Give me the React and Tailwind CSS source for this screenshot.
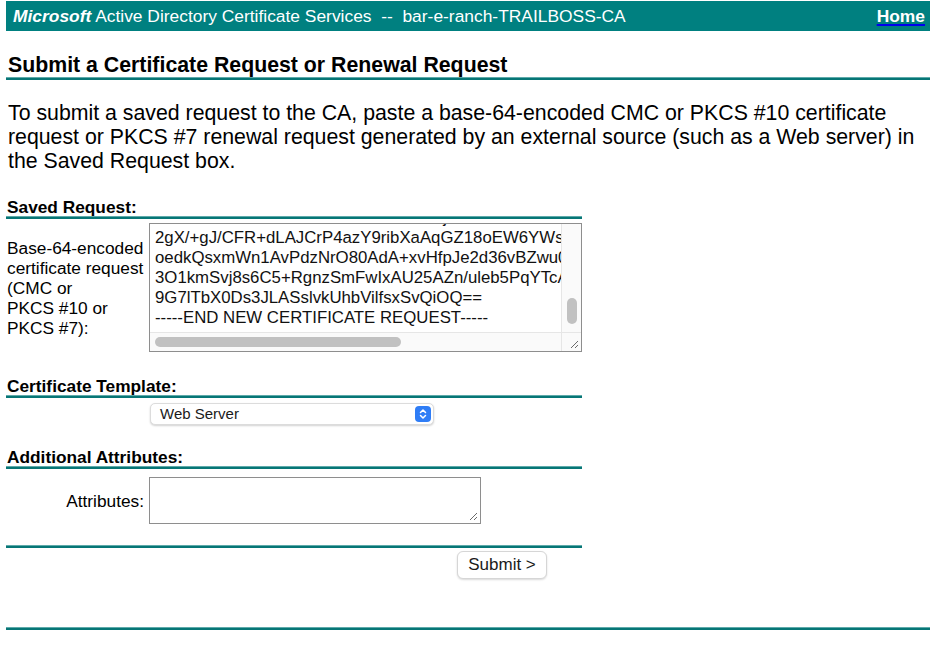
export default function App() {
  const font = "font-['Liberation_Sans',Arial,Helvetica,sans-serif]";
  return (
    <div className={`w-[936px] h-[650px] bg-white text-black ${font} px-[6px] pt-px overflow-hidden`}>
      {/* Header bar */}
      <div className="h-[30px] w-[924px] bg-[#008080] flex items-center justify-between pl-[7px] pr-[5px] text-white text-[17.4px] leading-[20px]">
        <div className="whitespace-pre">
          <span className="font-bold italic">Microsoft</span> Active Directory Certificate Services{"  --  "}bar-e-ranch-TRAILBOSS-CA
        </div>
        <a className="font-bold underline decoration-[#0000ee] decoration-2 underline-offset-2 text-white">Home</a>
      </div>

      {/* Title */}
      <div className="mt-[22px] w-[924px]">
        <div className="text-[21.3px] leading-[24px] font-bold pl-[2px]">Submit a Certificate Request or Renewal Request</div>
        <div className="h-[3px] bg-[#077676] border-t border-[#5faaaa]" />
      </div>

      {/* Paragraph */}
      <p className="mt-[21px] text-[21.3px] leading-[24px] pl-[2px] w-[924px]">
        To submit a saved request to the CA, paste a base-64-encoded CMC or PKCS #10 certificate request or PKCS #7 renewal request generated by an external source (such as a Web server) in the Saved Request box.
      </p>

      {/* Saved Request */}
      <div className="mt-[25px] w-[576px]">
        <div className="text-[17.3px] leading-[18px] font-bold pl-[1px]">Saved Request:</div>
        <div className="h-[3px] bg-[#077676] border-t border-[#5faaaa]" />
      </div>

      <div className="mt-[4px] w-[576px] flex items-center">
        <div className="w-[143px] text-[17.3px] leading-[20px] pl-px">
          Base-64-encoded<br />certificate request<br />(CMC or<br />PKCS #10 or<br />PKCS #7):
        </div>
        <div className="relative w-[433px] h-[129px] border border-[#8e8e8e] bg-white overflow-hidden">
          <div className="absolute inset-0 right-[20px] bottom-[19px] overflow-hidden">
            <div className="-mt-[16px] pl-[5px] text-[16.8px] leading-[20px] whitespace-pre text-[#111]">
              <div>AvR0kEtNbHs3ZK5W+Lm8Ux7dCfTa1jNRe4eIwM2cXb6Hk9ZtyS0Lf</div>
              <div>2gX/+gJ/CFR+dLAJCrP4azY9ribXaAqGZ18oEW6YWsfAq</div>
              <div>oedkQsxmWn1AvPdzNrO80AdA+xvHfpJe2d36vBZwu0Cd</div>
              <div>3O1kmSvj8s6C5+RgnzSmFwIxAU25AZn/uleb5PqYTcAk</div>
              <div>9G7lTbX0Ds3JLASslvkUhbVilfsxSvQiOQ==</div>
              <div>-----END NEW CERTIFICATE REQUEST-----</div>
            </div>
          </div>
          {/* vertical scrollbar track */}
          <div className="absolute top-0 right-0 w-[20px] bottom-[19px] bg-[#fafafa] border-l border-[#e6e6e6]">
            <div className="absolute left-[5px] top-[74px] w-[10px] h-[26px] rounded-full bg-[#c1c1c1]" />
          </div>
          {/* horizontal scrollbar track */}
          <div className="absolute left-0 bottom-0 right-[20px] h-[19px] bg-[#fafafa] border-t border-[#e6e6e6]">
            <div className="absolute left-[5px] top-[4px] w-[246px] h-[10px] rounded-full bg-[#c1c1c1]" />
          </div>
          {/* corner with grip */}
          <div className="absolute right-0 bottom-0 w-[20px] h-[19px] bg-[#fafafa] border-l border-t border-[#e6e6e6]">
            <svg className="absolute right-[2px] bottom-[2px]" width="10" height="10" viewBox="0 0 10 10">
              <line x1="2" y1="9" x2="9" y2="2" stroke="#6b6b6b" strokeWidth="1" />
              <line x1="6" y1="9" x2="9" y2="6" stroke="#6b6b6b" strokeWidth="1" />
            </svg>
          </div>
        </div>
      </div>

      {/* Certificate Template */}
      <div className="mt-[25px] w-[576px]">
        <div className="text-[17.3px] leading-[18px] font-bold pl-[1px]">Certificate Template:</div>
        <div className="h-[3px] bg-[#077676] border-t border-[#5faaaa]" />
      </div>
      <div className="mt-[5px] w-[576px] flex">
        <div className="w-[144px]" />
        <div className="w-[284px] h-[22px] rounded-[5px] bg-white border border-[#dcdcdc] shadow-[0_1px_2px_rgba(0,0,0,0.18)] flex items-center justify-between pl-[9px] pr-[2px]">
          <span className="text-[15px] leading-[18px] text-[#1a1a1a]">Web Server</span>
          <span className="w-[16px] h-[16px] rounded-[4px] bg-[#2f7df6] flex items-center justify-center">
            <svg width="10" height="12" viewBox="0 0 10 12">
              <polyline points="2.5,4.5 5,2 7.5,4.5" fill="none" stroke="white" strokeWidth="1.5" strokeLinecap="round" strokeLinejoin="round" />
              <polyline points="2.5,7.5 5,10 7.5,7.5" fill="none" stroke="white" strokeWidth="1.5" strokeLinecap="round" strokeLinejoin="round" />
            </svg>
          </span>
        </div>
      </div>

      {/* Additional Attributes */}
      <div className="mt-[23px] w-[576px]">
        <div className="text-[17.3px] leading-[18px] font-bold pl-[1px]">Additional Attributes:</div>
        <div className="h-[3px] bg-[#077676] border-t border-[#5faaaa]" />
      </div>
      <div className="mt-[8px] w-[576px] flex items-center">
        <div className="w-[143px] pr-[5px] text-right text-[17.3px] leading-[20px]">Attributes:</div>
        <div className="relative w-[332px] h-[47px] border border-[#8e8e8e] bg-white">
          <svg className="absolute right-[2px] bottom-[2px]" width="10" height="10" viewBox="0 0 10 10">
            <line x1="2" y1="9" x2="9" y2="2" stroke="#6b6b6b" strokeWidth="1" />
            <line x1="6" y1="9" x2="9" y2="6" stroke="#6b6b6b" strokeWidth="1" />
          </svg>
        </div>
      </div>

      <div className="mt-[21px] w-[576px] h-[3px] bg-[#077676] border-t border-[#5faaaa]" />

      <div className="mt-[3px] w-[576px] flex">
        <div className="ml-[451px] w-[90px] h-[28px] rounded-[6px] bg-white border border-[#d6d6d6] shadow-[0_1px_2px_rgba(0,0,0,0.15)] flex items-center justify-center text-[17px] text-[#1a1a1a]">
          Submit &gt;
        </div>
      </div>

      <div className="mt-[48px] w-[924px] h-[3px] bg-[#077676] border-t border-[#5faaaa]" />
    </div>
  );
}
